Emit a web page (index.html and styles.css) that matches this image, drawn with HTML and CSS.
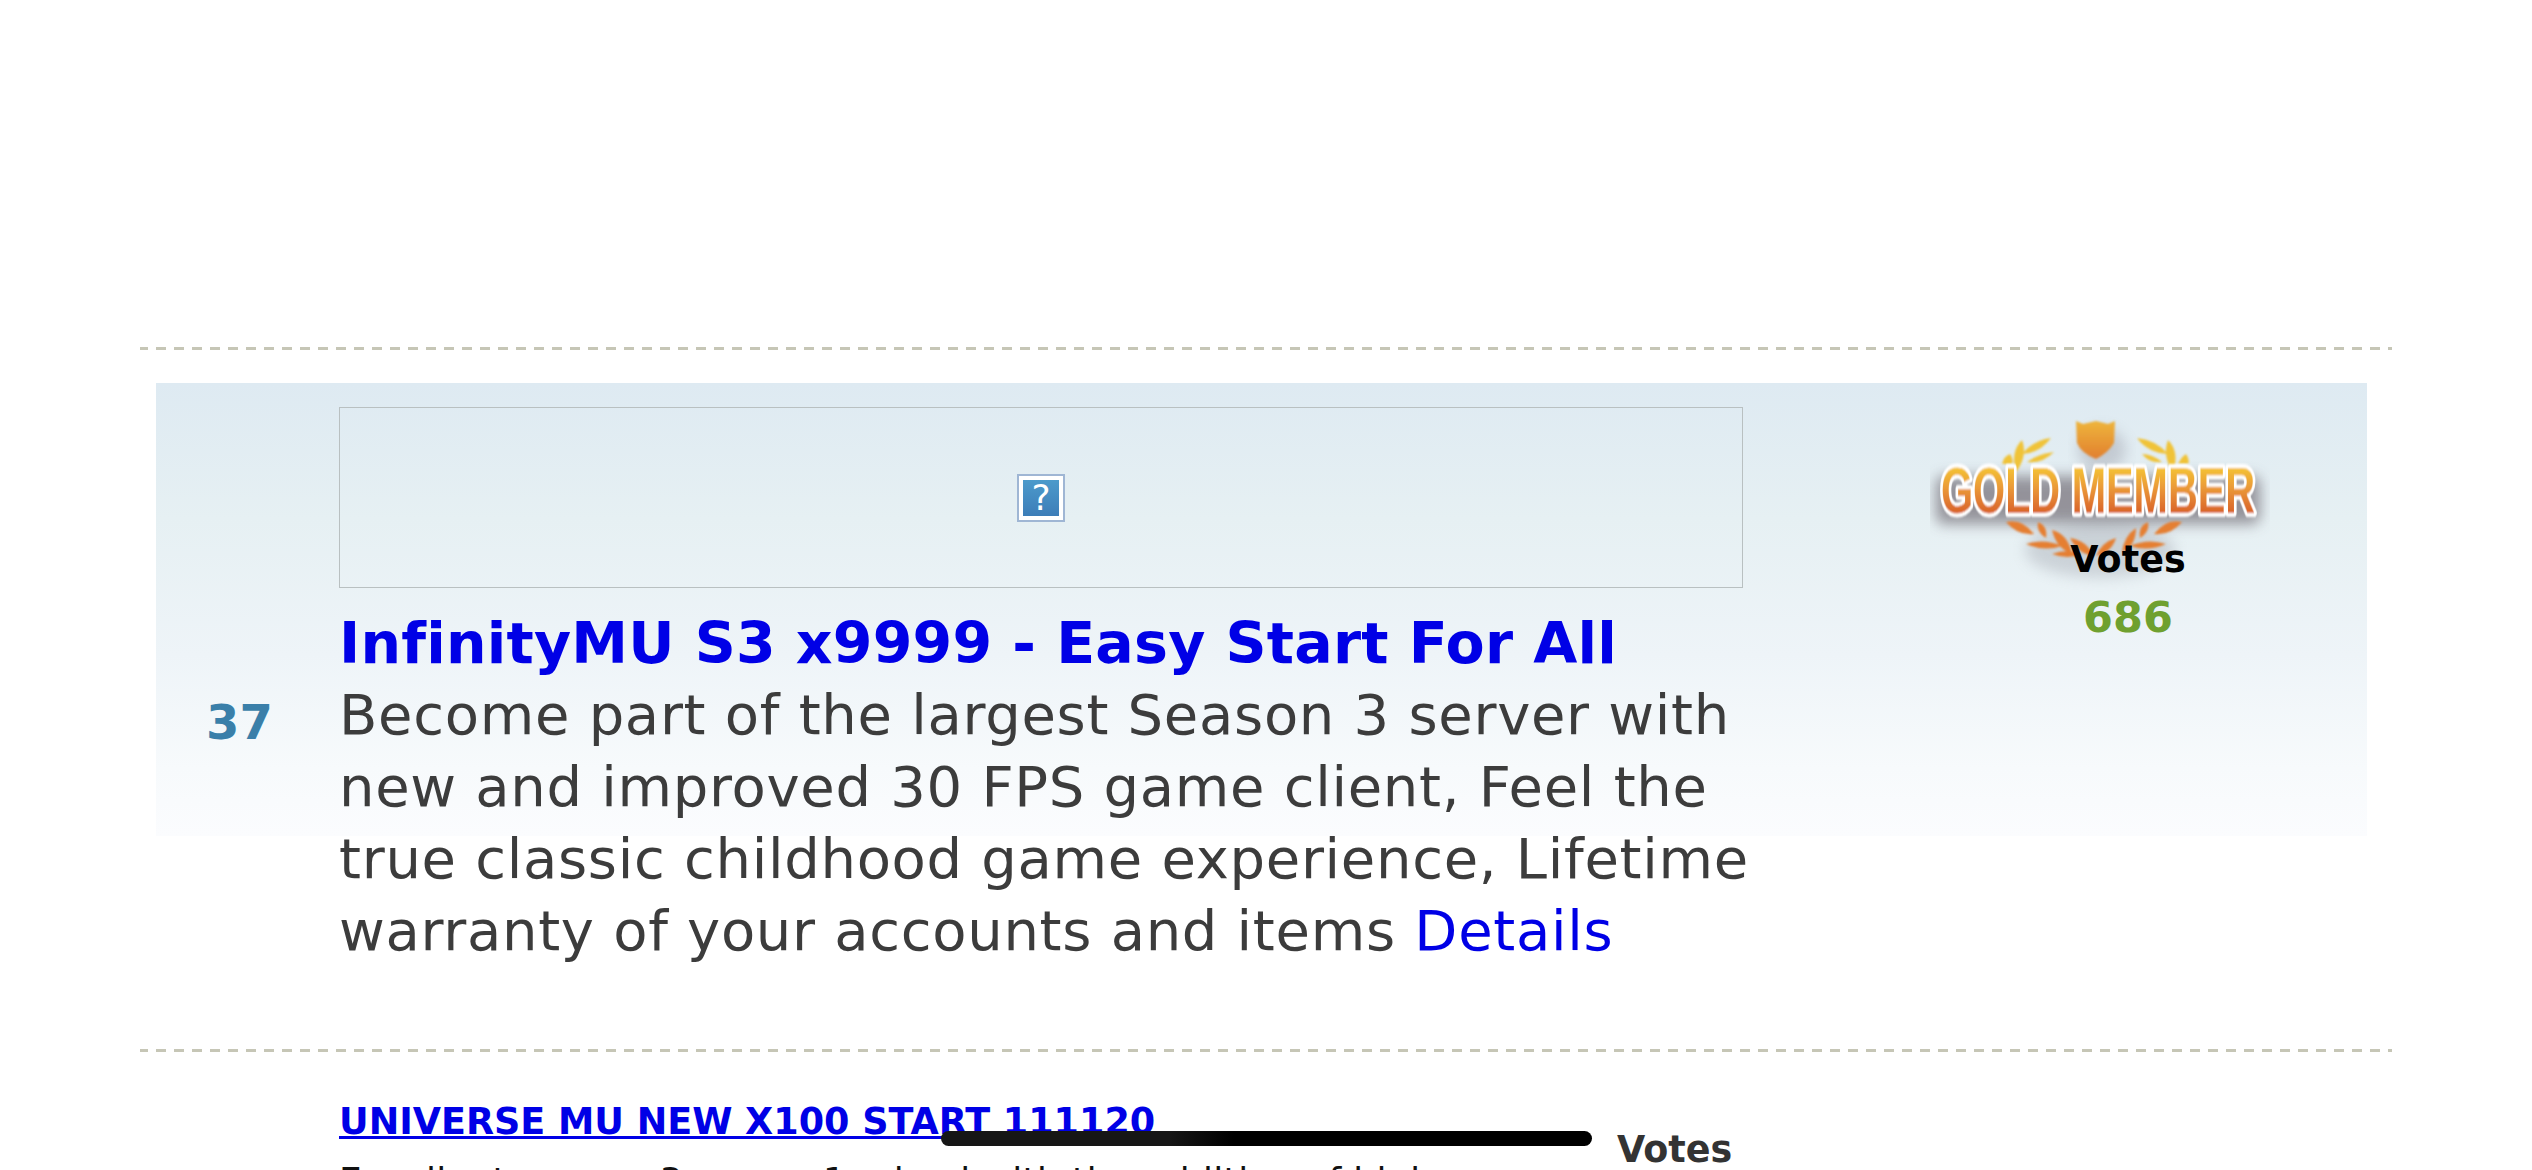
FILE: index.html
```html
<!DOCTYPE html>
<html lang="en">
<head>
    <meta charset="UTF-8">
    <meta name="viewport" content="width=device-width, initial-scale=1.0">
    <title>Server list</title>
    <link rel="stylesheet" href="styles.css">
</head>
<body>
<div class="server-list">

    <div class="divider"></div>

    <!-- Server 37 -->
    <div class="server-row featured">
        <div class="server-rank">37</div>
        <div class="server-main">
            <div class="banner">
                <span class="missing-image">?</span>
            </div>
            <a class="server-title" href="#">InfinityMU S3 x9999 - Easy Start For All</a>
            <p class="server-desc">Become part of the largest Season 3 server with new and improved 30 FPS game client, Feel the true classic childhood game experience, Lifetime warranty of your accounts and items <a href="#">Details</a></p>
        </div>
        <div class="server-votes">
            <svg class="gold-badge" viewBox="0 0 340 190" width="340" height="190">
                <defs>
                    <linearGradient id="gold-fill" x1="0" y1="-48" x2="0" y2="0" gradientUnits="userSpaceOnUse">
                        <stop offset="0" stop-color="#f6c832"/>
                        <stop offset="0.45" stop-color="#eb9c38"/>
                        <stop offset="1" stop-color="#d9622a"/>
                    </linearGradient>
                    <linearGradient id="shield-fill" x1="0" y1="0" x2="0" y2="1">
                        <stop offset="0" stop-color="#eeb53c"/>
                        <stop offset="1" stop-color="#e17f2f"/>
                    </linearGradient>
                    <filter id="soft" x="-20%" y="-40%" width="140%" height="180%">
                        <feGaussianBlur stdDeviation="7"/>
                    </filter>
                    <filter id="slight"><feGaussianBlur stdDeviation="0.8"/></filter>
                </defs>
                <!-- shadow -->
                <rect x="6" y="66" width="324" height="48" rx="8" fill="#5f5660" opacity="0.6" filter="url(#soft)"/>
                <ellipse cx="170" cy="140" rx="75" ry="28" fill="#8a8d98" opacity="0.3" filter="url(#soft)"/>
                <ellipse cx="172" cy="40" rx="24" ry="22" fill="#7d7a88" opacity="0.3" filter="url(#soft)"/>
                <!-- shield and laurels -->
                <g filter="url(#slight)">
                    <path d="M146 11 L153 14 L166 11 L178 14 L185 11 L184 33 Q178 43 166 49 Q151 43 147 33 Z" fill="url(#shield-fill)"/>
                    <g fill="#f0c339">
                        <path d="M86 62 Q80 42 92 30 Q98 46 86 62 Z"/>
                        <path d="M92 44 Q104 30 121 28 Q110 43 92 44 Z"/>
                        <path d="M97 52 Q108 44 124 42 Q112 54 97 52 Z"/>
                        <path d="M72 54 Q74 46 80 44 Q84 50 82 54 Z"/>
                        <path d="M243 62 Q250 42 238 30 Q232 46 243 62 Z"/>
                        <path d="M238 44 Q226 30 207 28 Q218 43 238 44 Z"/>
                        <path d="M232 52 Q222 44 212 44 Q220 54 232 52 Z"/>
                        <path d="M248 54 Q252 46 256 44 Q260 50 258 54 Z"/>
                    </g>
                    <g fill="#e57f33">
                        <path d="M76 112 Q92 108 104 124 Q88 126 76 112 Z"/>
                        <path d="M108 112 Q118 116 116 128 Q106 122 108 112 Z"/>
                        <path d="M122 120 Q138 124 142 144 Q126 138 122 120 Z"/>
                        <path d="M96 134 Q114 128 132 136 Q114 142 96 134 Z"/>
                        <path d="M122 144 Q138 138 152 144 Q138 150 122 144 Z"/>
                        <path d="M140 128 Q156 130 164 146 Q148 144 140 128 Z"/>
                        <path d="M252 112 Q236 108 224 124 Q240 126 252 112 Z"/>
                        <path d="M218 112 Q208 116 210 128 Q220 122 218 112 Z"/>
                        <path d="M206 118 Q194 126 192 142 Q206 136 206 118 Z"/>
                        <path d="M236 134 Q218 128 200 136 Q218 142 236 134 Z"/>
                        <path d="M186 128 Q172 132 166 146 Q182 142 186 128 Z"/>
                    </g>
                </g>
                <!-- lettering -->
                <g transform="translate(168 103) scale(0.645 1)" filter="url(#slight)">
                    <text class="gold-text outline" text-anchor="middle">GOLD MEMBER</text>
                    <text class="gold-text" text-anchor="middle" fill="url(#gold-fill)">GOLD MEMBER</text>
                </g>
            </svg>
            <div class="votes-label">Votes</div>
            <div class="votes-count">686</div>
        </div>
    </div>

    <div class="divider"></div>

    <!-- Next server, cut off by the window -->
    <div class="server-row compact">
        <div class="server-rank"></div>
        <div class="server-main">
            <a class="server-title small" href="#">UNIVERSE MU NEW X100 START 111120</a>
            <p class="server-desc dark">Excellent season 3 server 1 mixed with the addition of high</p>
        </div>
        <div class="server-votes plain">
            <div class="votes-label grey">Votes</div>
        </div>
    </div>
</div>

<div class="home-indicator"></div>
</body>
</html>
```

FILE: styles.css
```css
html, body {
    height: 100%;
}

body {
    margin: 0;
    background-color: #fff;
    font-family: "DejaVu Sans", Verdana, sans-serif;
    overflow: hidden;
    position: relative;
}

a {
    color: #0000e6;
    text-decoration: none;
}

.server-list {
    margin: 347px 140px 0;
}

.divider {
    height: 3px;
    background: linear-gradient(90deg, #c6c6b6 10px, transparent 10px) repeat-x -2px 0 / 18px 3px;
}

.server-row {
    display: grid;
    grid-template-columns: 183px 1404px 1fr;
    padding: 33px 25px 0 16px;
}

.featured {
    height: 699px;
    box-sizing: border-box;
    background: linear-gradient(#deeaf2, #e6f0f3 30%, #eef4f8 60%, #f7fafc 85%, #fbfcfe) no-repeat 16px 33px / calc(100% - 41px) 453px;
}

.compact {
    grid-template-columns: 183px 1278px 1fr;
    padding-top: 48px;
}

.server-rank {
    align-self: center;
    padding: 12px 0 0 50px;
    color: #3a7fa9;
    font-size: 48px;
    font-weight: bold;
}

.banner {
    height: 179px;
    margin-top: 24px;
    border: 1px solid #b9c0c1;
    display: flex;
    align-items: center;
    justify-content: center;
}

.missing-image {
    width: 36px;
    height: 36px;
    border: 4px solid #fff;
    outline: 2px solid #9fb6d4;
    background: linear-gradient(#4c9acb, #3c7db8);
    color: #fff;
    font-size: 36px;
    line-height: 36px;
    text-align: center;
}

.server-title {
    display: block;
    margin-top: 23px;
    font-size: 57px;
    font-weight: bold;
    line-height: 64px;
    letter-spacing: 0.2px;
}

.server-title.small {
    display: inline-block;
    margin-top: 0;
    font-size: 36.5px;
    line-height: 44px;
    letter-spacing: 0;
    white-space: nowrap;
    text-decoration: underline;
}

.server-desc {
    margin: 4px -30px 0 0;
    color: #3c3c3c;
    font-size: 56px;
    line-height: 72px;
    letter-spacing: 0.7px;
}

.server-desc.dark {
    margin: 12px 0 0;
    color: #111;
    font-size: 36px;
    line-height: 50px;
    letter-spacing: 0.4px;
    white-space: nowrap;
}

.server-votes {
    display: flex;
    flex-direction: column;
    align-items: center;
    position: relative;
    padding: 155px 0 0 146px;
}

.server-votes.plain {
    padding: 28px 0 0;
    align-items: flex-start;
}

.gold-badge {
    position: absolute;
    left: 187px;
    top: 27px;
}

.gold-text {
    font-family: "Liberation Sans", Arial, sans-serif;
    font-size: 64px;
    font-weight: bold;
}

.gold-text.outline {
    fill: #fff;
    stroke: #fff;
    stroke-width: 8px;
    stroke-linejoin: round;
}

.votes-label {
    position: relative;
    color: #000;
    font-size: 36.5px;
    font-weight: bold;
    line-height: 44px;
}

.votes-label.grey {
    color: #333;
}

.votes-count {
    position: relative;
    margin-top: 8px;
    color: #6fa02f;
    font-size: 43px;
    font-weight: bold;
    line-height: 54px;
}

/* phone home bar sits over the page */
.home-indicator {
    position: absolute;
    left: 941px;
    top: 1131px;
    width: 651px;
    height: 15px;
    border-radius: 8px;
    background: linear-gradient(90deg, #161616, #161616 35%, #000 45%);
}
```
